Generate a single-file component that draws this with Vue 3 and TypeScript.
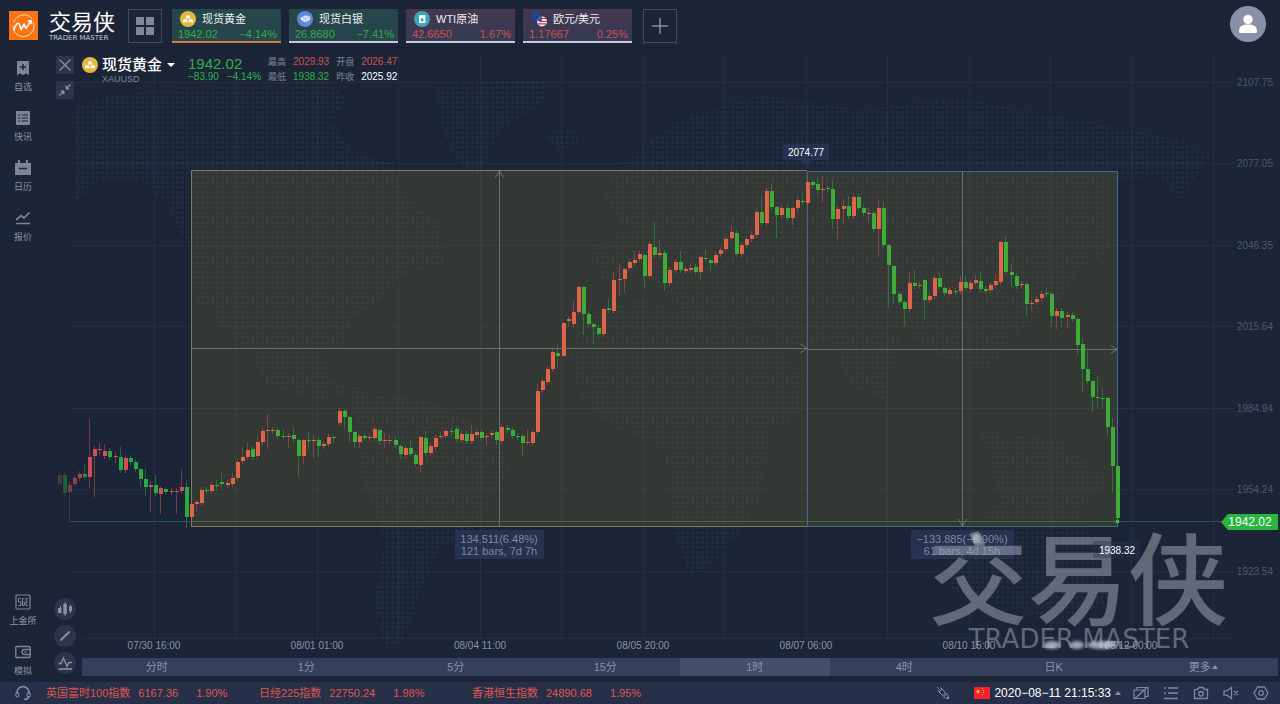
<script setup lang="ts">
import { computed, ref } from 'vue'

type Bar = [dir: 'u' | 'd', top: number, bottom: number, high?: number, low?: number]

interface Quote {
  icon: 'gold' | 'silver' | 'oil' | 'euro'
  name: string
  price: string
  change: string
  trend: 'up' | 'down'
}

const quotes: Quote[] = [
  { icon: 'gold', name: '现货黄金', price: '1942.02', change: '−4.14%', trend: 'down' },
  { icon: 'silver', name: '现货白银', price: '26.8680', change: '−7.41%', trend: 'down' },
  { icon: 'oil', name: 'WTI原油', price: '42.6650', change: '1.67%', trend: 'up' },
  { icon: 'euro', name: '欧元/美元', price: '1.17667', change: '0.25%', trend: 'up' },
]
const activeQuote = ref(0)

const periods = ['分时', '1分', '5分', '15分', '1时', '4时', '日K', '更多']
const activePeriod = ref(4)

const indices = [
  { name: '英国富时100指数', value: '6167.36', change: '1.90%' },
  { name: '日经225指数', value: '22750.24', change: '1.98%' },
  { name: '香港恒生指数', value: '24890.68', change: '1.95%' },
]

const priceAxis = [
  { y: 82, label: '2107.75' },
  { y: 163, label: '2077.05' },
  { y: 245, label: '2046.35' },
  { y: 326, label: '2015.64' },
  { y: 408, label: '1984.94' },
  { y: 489, label: '1954.24' },
  { y: 571, label: '1923.54' },
]
const timeAxis = [
  { x: 154, label: '07/30 16:00' },
  { x: 317, label: '08/01 01:00' },
  { x: 480, label: '08/04 11:00' },
  { x: 643, label: '08/05 20:00' },
  { x: 806, label: '08/07 06:00' },
  { x: 969, label: '08/10 15:00' },
  { x: 1131, label: '08/12 00:00' },
]
const gridColumns = Array.from({ length: 14 }, (_, i) => Math.round(154 + i * 81.45))

const bars: Bar[] = [
  ['u', 475, 484], ['d', 475, 493], ['u', 485, 492, 482, 523], ['u', 478, 484], ['u', 474, 478],
  ['d', 474, 477, 464], ['u', 457, 477, 419, 488], ['u', 449, 456, 446, 497], ['u', 449, 450, 443, 455],
  ['u', 451, 456, 444], ['d', 451, 457], ['u', 456, 457, 452, 463], ['d', 457, 470, 447], ['u', 458, 470],
  ['d', 458, 462], ['d', 462, 469], ['d', 469, 479, 468, 487], ['d', 479, 487, 469, 496], ['u', 485, 487, 481, 512],
  ['d', 485, 493, 475], ['u', 488, 494, 486, 514], ['d', 489, 492, 487, 495], ['u', 491, 492], ['u', 491, 492, 488, 514],
  ['u', 487, 491, 469], ['d', 487, 517, 480, 528],
  ['u', 504, 517, 501, 527], ['u', 502, 504, 500, 512], ['u', 490, 503], ['d', 490, 491], ['u', 485, 491],
  ['d', 485, 486, 480, 491], ['d', 482, 484, 473], ['u', 483, 485], ['u', 478, 484, 473], ['u', 462, 478, 458],
  ['u', 457, 461, 447], ['u', 450, 457, 443], ['d', 449, 457], ['u', 442, 456, 436], ['u', 431, 442],
  ['u', 430, 431, 414, 449], ['u', 430, 431, 427, 434], ['d', 430, 436], ['d', 436, 437, 429, 439], ['u', 436, 437, 434, 448],
  ['d', 435, 439, 427], ['d', 440, 456, 438, 477], ['u', 440, 456, 439, 464], ['d', 440, 441, 432, 449], ['u', 440, 441, 435, 458],
  ['d', 440, 446, 438, 457], ['u', 444, 446], ['u', 437, 444], ['d', 437, 438, 435, 443], ['u', 411, 423],
  ['d', 411, 417, 409, 428], ['d', 417, 432, 416, 442], ['d', 432, 442, 431, 448], ['u', 436, 442, 434, 448], ['d', 436, 438],
  ['u', 437, 438], ['u', 429, 438], ['d', 430, 441, 428, 445], ['u', 440, 441, 433, 448], ['u', 440, 441, 435, 444],
  ['d', 440, 445], ['d', 446, 454, 444, 459], ['u', 448, 455], ['d', 448, 454, 440], ['d', 455, 464],
  ['u', 437, 465, 436, 472], ['d', 438, 453, 431], ['u', 446, 453], ['u', 438, 447], ['u', 436, 437, 432, 439],
  ['u', 431, 436], ['d', 431, 432, 428, 436], ['d', 429, 439], ['u', 434, 440], ['d', 434, 441],
  ['u', 434, 441, 425], ['u', 432, 435], ['d', 432, 438], ['u', 436, 437, 435, 445], ['u', 433, 435],
  ['d', 432, 440, 430, 445], ['u', 427, 441, 424], ['d', 428, 430], ['d', 430, 436], ['d', 436, 437],
  ['d', 436, 443, 434, 456], ['u', 442, 443, 429, 445], ['u', 432, 443], ['u', 391, 432, 384], ['u', 381, 390],
  ['u', 369, 382], ['u', 352, 369], ['d', 353, 356, 344, 367], ['u', 323, 356, 322, 357], ['u', 319, 321, 316, 327],
  ['u', 312, 324, 300], ['u', 287, 312, 286], ['d', 287, 314, 286, 335], ['d', 314, 324], ['d', 324, 327, 323, 344],
  ['d', 328, 334], ['u', 309, 334, 308], ['d', 308, 310, 299], ['u', 280, 311, 272], ['u', 279, 280, 264, 296],
  ['u', 269, 279, 268, 293], ['u', 262, 268], ['u', 260, 263, 251], ['u', 254, 259, 250], ['d', 255, 276, 254, 288],
  ['u', 244, 276, 241, 279], ['d', 247, 255, 222], ['u', 253, 255, 240], ['d', 253, 283, 250, 291], ['u', 270, 283],
  ['u', 262, 270], ['d', 262, 270, 251], ['u', 269, 271], ['u', 268, 270, 263], ['d', 267, 272],
  ['u', 257, 272, 256, 279], ['d', 258, 259, 250], ['d', 260, 263, 258, 271], ['u', 255, 263], ['u', 250, 254],
  ['u', 239, 249], ['u', 232, 238, 225], ['d', 233, 254], ['u', 245, 254], ['u', 239, 245],
  ['u', 235, 239, 231], ['u', 212, 235], ['d', 212, 223, 197], ['u', 191, 223], ['d', 191, 207, 184],
  ['d', 207, 215, 206, 238], ['u', 208, 215], ['d', 208, 218], ['u', 208, 218, 207, 225], ['u', 200, 208],
  ['d', 201, 202, 193], ['u', 182, 203, 180], ['d', 182, 185, 180], ['d', 184, 190, 178], ['u', 189, 190, 176, 202],
  ['d', 188, 189], ['d', 189, 219, 180, 229], ['u', 209, 219, 206, 239], ['u', 206, 209, 199, 224], ['d', 206, 216, 196],
  ['u', 197, 216], ['d', 197, 208], ['d', 208, 213], ['u', 213, 214, 208, 222], ['d', 213, 229],
  ['u', 208, 229, 200, 256], ['d', 208, 245, 202], ['d', 245, 265, 244, 308], ['d', 266, 294, 265, 304], ['d', 294, 302],
  ['d', 302, 309, 300, 327], ['u', 283, 309, 272], ['d', 283, 286, 270], ['u', 285, 286], ['d', 280, 300, 279, 320],
  ['u', 296, 300], ['u', 278, 296], ['d', 278, 287, 272], ['d', 288, 293], ['u', 290, 294],
  ['d', 291, 292], ['u', 282, 291, 276], ['d', 282, 288, 275], ['u', 283, 289], ['u', 280, 283, 275],
  ['d', 281, 289, 272], ['d', 289, 291], ['u', 285, 290], ['u', 281, 285, 274], ['u', 242, 282, 241],
  ['d', 242, 272, 236], ['d', 272, 275, 264, 287], ['d', 276, 286], ['u', 284, 285], ['d', 284, 304, 283, 316],
  ['u', 303, 304, 300, 311], ['u', 299, 302], ['u', 294, 298], ['d', 293, 294, 288], ['d', 294, 316, 292, 327],
  ['u', 311, 316, 308, 329], ['d', 311, 318, 308, 327], ['u', 315, 317, 312, 328], ['d', 315, 319], ['d', 319, 345, 317, 355],
  ['d', 344, 369, 338, 393], ['d', 369, 381, 351], ['d', 381, 397, 380, 412], ['d', 397, 398, 376, 408], ['d', 398, 399, 388, 408],
  ['d', 398, 427, 396, 436], ['d', 427, 466, 418, 492], ['d', 466, 518, 465, 527],
]

const firstBarX = 58.5
const barPitch = 5.091
const measuredFrom = 26

const candles = computed(() =>
  bars.map(([dir, top, bottom, high, low], i) => ({
    x: Math.round(firstBarX + i * barPitch),
    top,
    height: Math.max(1, bottom - top),
    high: high ?? top - 3,
    low: low ?? bottom + 3,
    tone: `${dir === 'u' ? 'rise' : 'fall'}${i >= measuredFrom ? ' measured' : ''}`,
    opacity: Math.min(1, 0.3 + i * 0.11),
  })),
)

const land = [
  'M75 108 L110 96 L215 84 L330 82 L345 100 L330 120 L350 150 L395 165 L400 190 L440 225 L445 265 L400 275 L380 300 L350 320 L345 350 L325 355 L330 380 L365 390 L320 400 L265 385 L250 350 L225 330 L195 300 L190 250 L165 200 L140 180 L100 180 L75 200 Z',
  'M350 390 L430 400 L500 440 L510 470 L490 500 L470 530 L440 550 L420 590 L405 640 L385 650 L375 600 L385 540 L360 470 Z',
  'M435 84 L545 80 L545 100 L500 130 L475 180 L455 160 L440 120 Z',
  'M545 135 L570 128 L580 142 L560 155 Z',
  'M600 190 L640 150 L680 120 L760 95 L860 110 L960 98 L1080 120 L1180 140 L1210 155 L1180 200 L1160 175 L1110 180 L1110 250 L1080 270 L1060 300 L1020 330 L985 375 L950 360 L900 330 L890 400 L850 385 L830 340 L780 350 L750 320 L690 320 L640 270 L600 280 L590 250 L625 230 Z',
  'M590 315 L640 300 L740 320 L780 350 L810 375 L800 410 L770 440 L760 500 L720 560 L690 575 L670 520 L665 450 L620 430 L580 400 L570 350 Z',
  'M980 430 L1060 440 L1110 480 L1080 510 L1110 600 L1060 625 L990 600 L950 590 L950 540 L1000 500 Z',
]
</script>

<template>
  <div class="page">
    <header class="topbar">
      <a class="brand" href="#" aria-label="交易侠 TRADER MASTER">
        <svg class="brand-mark" viewBox="0 0 30 30" aria-hidden="true">
          <rect width="30" height="30" fill="#ff7412" />
          <path d="M24 8 A11 11 0 0 0 5 12 M4 15 A11 11 0 0 0 26 16 V12" fill="none" stroke="#ffe6d3" stroke-width=".9" />
          <path d="M5 20 C7 13 9.500 11 10.800 14 L12.500 19.500 L15.500 13.500 L17.500 18 L22.500 10.500 M19.500 10.700 L22.900 10 L23.400 13.500" fill="none" stroke="#fff" stroke-width="1.600" stroke-linejoin="round" />
        </svg>
        <span class="brand-text">
          <span class="brand-name">交易侠</span>
          <span class="brand-sub">TRADER MASTER</span>
        </span>
      </a>
      <button class="square" type="button" aria-label="布局">
        <svg viewBox="0 0 18 18" width="18" height="18"><path d="M0 0h8v8H0zM10 0h8v8h-8zM0 10h8v8H0zM10 10h8v8h-8z" fill="#808799" /></svg>
      </button>
      <div class="quotes">
        <button
          v-for="(q, i) in quotes"
          :key="q.name"
          type="button"
          class="quote"
          :class="[q.trend, { active: i === activeQuote }]"
          @click="activeQuote = i"
        >
          <span class="quote-name">
            <svg viewBox="0 0 16 16" width="16" height="16" aria-hidden="true">
              <template v-if="q.icon === 'gold'">
                <circle cx="8" cy="8" r="8" fill="#e5b93f" />
                <path d="M6.500 4.500h3l1 3h-5zM3.500 8.300h3.300l1 3h-5zM9.200 8.300h3.300l.8 3h-5z" fill="#fff" />
              </template>
              <template v-else-if="q.icon === 'silver'">
                <circle cx="8" cy="8" r="8" fill="#5f86d8" />
                <path d="M2.800 7 L6 5.500 L8 4.500 L12.500 5 L13.300 8.500 L9 11.500 L6 10.500 Z" fill="#dce6fb" />
                <path d="M6 6.500 L8.500 7.500 L9 11 M8.500 7.500 L12.500 5.500" stroke="#8ea9e4" stroke-width=".8" fill="none" />
              </template>
              <template v-else-if="q.icon === 'oil'">
                <circle cx="8" cy="8" r="8" fill="#3ca4bd" />
                <rect x="5" y="4" width="6.500" height="8" rx="1" fill="#fff" />
                <path d="M8.200 6 L9.500 8.500 A1.400 1.400 0 1 1 6.900 8.500 Z" fill="#3ca4bd" />
              </template>
              <template v-else>
                <circle cx="5.500" cy="5.500" r="5" fill="#173d9c" />
                <circle cx="5.500" cy="5.500" r="2.800" fill="none" stroke="#8b8a4f" stroke-width=".8" stroke-dasharray="1 1.200" />
                <circle cx="11" cy="10.500" r="5" fill="#e9e2ea" />
                <path d="M10 7.500h5M8 10.500h8M6.500 12.800h8.500" stroke="#cf4057" stroke-width="1.200" />
                <path d="M6.100 10 A5 5 0 0 1 11 5.500 V10 Z" fill="#42549b" />
              </template>
            </svg>
            {{ q.name }}
          </span>
          <span class="quote-values"><span>{{ q.price }}</span><span>{{ q.change }}</span></span>
        </button>
      </div>
      <button class="square add" type="button" aria-label="添加">
        <svg viewBox="0 0 16 16" width="16" height="16"><path d="M8 0v16M0 8h16" stroke="#848b9c" stroke-width="1.500" /></svg>
      </button>
      <button class="avatar" type="button" aria-label="账户">
        <svg viewBox="0 0 36 36" width="36" height="36">
          <circle cx="18" cy="18" r="18" fill="#8a90a8" />
          <circle cx="18" cy="13.500" r="4.700" fill="#fff" />
          <path d="M9 25.500 C9 20 13 18.500 18 18.500 S27 20 27 25.500 Q27 27 25.500 27 H10.500 Q9 27 9 25.500Z" fill="#fff" />
        </svg>
      </button>
    </header>

    <div class="body">
      <nav class="sidebar">
        <button type="button">
          <svg viewBox="0 0 16 16"><path d="M2 1h12v14l-3-1.500L8 15l-3-1.500L2 15z" fill="#7d8498" /><path d="M8 4v6M5 7h6" stroke="#1c2538" stroke-width="1.500" /></svg>
          自选
        </button>
        <button type="button">
          <svg viewBox="0 0 16 16"><rect x="1" y="1" width="14" height="14" rx="1" fill="#7d8498" /><path d="M3 5h2M6.500 5h6.500M3 8h2M6.500 8h6.500M3 11h2M6.500 11h6.500" stroke="#1c2538" stroke-width="1.200" /></svg>
          快讯
        </button>
        <button type="button">
          <svg viewBox="0 0 16 16"><path d="M0 3h3V0h2v3h6V0h2v3h3v12H0z" fill="#7d8498" /><path d="M4 8.500h8" stroke="#1c2538" stroke-width="1.500" /></svg>
          日历
        </button>
        <button type="button">
          <svg viewBox="0 0 16 16"><path d="M1 10 L6 5.500 L9 8 L14.500 2.500 M1 13.500h14" fill="none" stroke="#7d8498" stroke-width="1.700" /></svg>
          报价
        </button>
        <span class="spring"></span>
        <button type="button">
          <svg viewBox="0 0 16 16"><rect x="1" y="1" width="14" height="14" rx="1" fill="none" stroke="#7d8498" stroke-width="1.200" /><path d="M5.800 4.500H3.500v3.300h2.300v3.700H3.200M9.400 4.500H7.500v7h1.900V8.300h-.8M13 4.500h-2v7h2M11 8h2" fill="none" stroke="#7d8498" /></svg>
          上金所
        </button>
        <button type="button">
          <svg viewBox="0 0 16 16"><rect x=".8" y="2.500" width="14.400" height="11" rx="1" fill="none" stroke="#7d8498" stroke-width="1.400" /><path d="M15 5.500H9.500a2.500 2.500 0 0 0 0 5H15" fill="none" stroke="#7d8498" stroke-width="1.400" /><path d="M9.500 8h2" stroke="#7d8498" stroke-width="1.400" /></svg>
          模拟
        </button>
      </nav>

      <main class="main">
        <div class="stage">
          <svg class="chart" viewBox="46 48 1234 610" role="img" aria-label="现货黄金 XAUUSD 1时 K线图">
            <defs>
              <pattern id="dots" width="5" height="5" patternUnits="userSpaceOnUse">
                <rect x="1" y="1" width="3" height="3" fill="#3a4663" fill-opacity=".2" />
              </pattern>
              <filter id="soft" x="-50%" y="-50%" width="200%" height="200%"><feGaussianBlur stdDeviation="1.800" /></filter>
            </defs>
            <path v-for="shape in land" :key="shape" :d="shape" fill="url(#dots)" />

            <g class="grid-lines">
              <path v-for="x in gridColumns" :key="x" :d="`M${x + 0.5} 56V638`" />
              <path v-for="tick in priceAxis" :key="tick.y" :d="`M70 ${tick.y + 0.5}H1234`" />
              <path d="M82 638.500H1234" />
            </g>
            <path class="last-line" d="M70 521.500H1224" />

            <g class="measure">
              <rect x="191" y="170" width="616" height="357" />
              <rect x="807" y="171" width="311" height="356" />
            </g>
            <path class="last-line inner" d="M191 521.500H1118" />
            <path class="edge yellow" d="M807 170.500H191.500V526.500H807" />
            <path class="edge blue" d="M807.500 171.500H1117.500V526.500H807.500Z" />
            <g class="arrows">
              <path d="M191 348.500H807M800 344l7 4.500l-7 4.500M499.500 527V171M495 178l4.500-7l4.500 7" />
              <path d="M807 349.500H1117M1110 345l7 4.500l-7 4.500M962.500 171V526M958 519l4.500 7l4.500-7" />
            </g>

            <g v-for="c in candles" :key="c.x" :class="c.tone" :opacity="c.opacity">
              <path class="wick" :d="`M${c.x + 0.5} ${c.high}V${c.low}`" />
              <rect :x="c.x - 1" :y="c.top" width="4" :height="c.height" />
            </g>
            <circle cx="1117.500" cy="521.500" r="2" fill="#37b84f" />

            <g class="axis-text">
              <text v-for="tick in priceAxis" :key="tick.label" class="price" x="1273" :y="tick.y + 4">{{ tick.label }}</text>
              <text v-for="tick in timeAxis" :key="tick.label" class="time" :x="tick.x" y="649">{{ tick.label }}</text>
            </g>

            <g>
              <rect class="tag" x="455" y="530" width="89" height="29" />
              <text class="measure-text" x="499" y="543">134.511(6.48%)</text>
              <text class="measure-text" x="499" y="555">121 bars, 7d 7h</text>
              <rect class="tag" x="911" y="530" width="103" height="29" />
              <text class="measure-text" x="962" y="543">−133.885(−6.90%)</text>
              <text class="measure-text" x="962" y="555">61 bars, 4d 15h</text>
            </g>
            <path class="tag" d="M783 144H829V160H812L807 167L801 160H783Z" />
            <text class="peak" x="806" y="156">2074.77</text>

            <g class="watermark">
              <text class="watermark-name" x="1078" y="617">交易侠</text>
              <text class="watermark-sub" x="1079" y="648">TRADER MASTER</text>
            </g>
            <g filter="url(#soft)" fill="#d5d9e2" fill-opacity=".7">
              <ellipse cx="1052" cy="645" rx="8" ry="4" />
              <ellipse cx="1077" cy="645" rx="7" ry="4" />
              <ellipse cx="1102" cy="645" rx="15" ry="4" />
              <rect x="973" y="534" width="8" height="9" fill-opacity=".5" />
            </g>
            <rect class="tag low-tag" x="1093" y="541" width="47" height="17" />
            <text class="peak" x="1117" y="554">1938.32</text>

            <path d="M1221 522L1228 514H1278V530H1228Z" fill="#2ab63e" />
            <text class="last-price" x="1250" y="526">1942.02</text>
          </svg>

          <div class="overlay">
            <div class="tools-top">
              <button type="button" aria-label="关闭"><svg viewBox="0 0 18 18"><path d="M3.500 3.500l11 11M14.500 3.500l-11 11" stroke="#8b92a4" stroke-width="1.200" /></svg></button>
              <button type="button" aria-label="收起"><svg viewBox="0 0 18 18"><path d="M3.500 14.500L7 11M14.500 3.500L11 7" stroke="#8b92a4" stroke-width="1.300" /><path d="M4.800 10H8v3.200zM10 4.800V8h3.200z" fill="#8b92a4" stroke="#8b92a4" /></svg></button>
            </div>
            <div class="symbol">
              <svg viewBox="0 0 16 16" width="16" height="16" aria-hidden="true">
                <circle cx="8" cy="8" r="8" fill="#e5b93f" />
                <path d="M6.500 4.500h3l1 3h-5zM3.500 8.300h3.300l1 3h-5zM9.200 8.300h3.300l.8 3h-5z" fill="#fff" />
              </svg>
              <div>
                <button type="button" class="symbol-name">现货黄金<span class="caret-down"></span></button>
                <div class="symbol-code">XAUUSD</div>
              </div>
            </div>
            <div class="price-block">
              <div class="price-now">1942.02</div>
              <div class="price-diff"><span>−83.90</span><span>−4.14%</span></div>
            </div>
            <dl class="stats">
              <dt>最高</dt><dd class="red">2029.93</dd><dt>开盘</dt><dd class="red">2026.47</dd>
              <dt>最低</dt><dd class="green">1938.32</dd><dt>昨收</dt><dd>2025.92</dd>
            </dl>
          </div>

          <div class="tools-bottom">
            <button type="button" aria-label="图表类型"><svg viewBox="0 0 22 22"><path d="M4 10h3.500v5H4zM9.300 6h3.500v10H9.300zM15 8.500h3v4.500h-3z" fill="#8b92a4" /><path d="M6.500 8v2M11 4v14M16.500 7v8" stroke="#8b92a4" /></svg></button>
            <button type="button" aria-label="画线"><svg viewBox="0 0 22 22"><path d="M6.500 15.500L15.500 6.500" stroke="#8b92a4" stroke-width="2" /></svg></button>
            <button type="button" aria-label="指标"><svg viewBox="0 0 22 22"><path d="M4.500 11.500H7L9.500 6L13 14.500L14.800 10.500H18M4.500 17H18" fill="none" stroke="#8b92a4" stroke-width="1.400" /></svg></button>
          </div>
        </div>

        <div class="periods">
          <button
            v-for="(p, i) in periods"
            :key="p"
            type="button"
            :class="{ active: i === activePeriod }"
            @click="activePeriod = i"
          >
            {{ p }}<span v-if="i === periods.length - 1" class="caret-up"></span>
          </button>
        </div>
      </main>
    </div>

    <footer class="status">
      <button type="button" class="support" aria-label="客服">
        <svg viewBox="0 0 16 16"><path d="M2 9V7.500a6 6 0 0 1 12 0V9M13.500 11c0 2-1.500 3.500-4.500 3.500" fill="none" stroke="#8b94a9" stroke-width="1.400" /><rect x=".8" y="7.500" width="3" height="4.500" rx="1.200" fill="none" stroke="#8b94a9" /><rect x="12.200" y="7.500" width="3" height="4.500" rx="1.200" fill="none" stroke="#8b94a9" /></svg>
      </button>
      <div class="indices">
        <div v-for="item in indices" :key="item.name" class="index">
          <span>{{ item.name }}</span><span>{{ item.value }}</span><span class="pct">{{ item.change }}</span>
        </div>
      </div>
      <button type="button" class="plug" aria-label="连接">
        <svg viewBox="0 0 16 16"><path d="M2 2l3 3M4 7l3-3l2.500 2.500a2.100 2.100 0 0 1-3 3zM5.500 2.500L7 4M2.500 5.500L4 7M14 14l-2-2M9 11.500L11.500 9l1.800 1.800a1.800 1.800 0 0 1-2.500 2.500zM9 11.500l-1 1M11.500 9l1-1" fill="none" stroke="#8891a8" /></svg>
      </button>
      <button type="button" class="clock">
        <svg viewBox="0 0 16 12" width="16" height="12" aria-hidden="true"><rect width="16" height="12" fill="#f5222d" /><path d="M4 2l.6 1.700h1.800L5 4.800l.5 1.700L4 5.500L2.500 6.500L3 4.800L1.600 3.700h1.800z" fill="#ffd83b" /><path d="M8 1.500h1M9 3.500h1M9 5.500h1M8 7.500h1" stroke="#ffb43b" /></svg>
        2020−08−11 21:15:33<span class="caret-up"></span>
      </button>
      <div class="status-icons">
        <button type="button" aria-label="隐藏面板"><svg viewBox="0 0 16 16"><path d="M1 5h11v8.500H1zM4 5V2.500h11v9h-3M1.500 14L14 2.500" fill="none" stroke="#7f889e" stroke-width="1.200" /></svg></button>
        <button type="button" aria-label="列表"><svg viewBox="0 0 16 16"><path d="M5 3h10M5 8h10M1 13.500h14" stroke="#7f889e" stroke-width="1.500" /><path d="M1 3h2M1 8h2" stroke="#7f889e" stroke-width="1.500" /></svg></button>
        <button type="button" aria-label="截图"><svg viewBox="0 0 16 16"><path d="M1.500 4.500h3L6 2.500h4l1.500 2h3v9h-13z" fill="none" stroke="#7f889e" stroke-width="1.300" stroke-linejoin="round" /><circle cx="8" cy="8.800" r="2.300" fill="none" stroke="#7f889e" stroke-width="1.300" /></svg></button>
        <button type="button" aria-label="静音"><svg viewBox="0 0 16 16"><path d="M1 5.800h3L8.500 2.500v11L4 10.200H1zM11 6l4 4M15 6l-4 4" fill="none" stroke="#7f889e" stroke-width="1.300" /></svg></button>
        <button type="button" aria-label="设置"><svg viewBox="0 0 16 16"><path d="M4.500 2h7L15 8l-3.500 6h-7L1 8z" fill="none" stroke="#7f889e" stroke-width="1.300" stroke-linejoin="round" /><circle cx="8" cy="8" r="2.300" fill="none" stroke="#7f889e" stroke-width="1.300" /></svg></button>
      </div>
    </footer>
  </div>
</template>

<style>
body {
  background: #1c2538;
}
</style>

<style scoped>
.page {
  min-height: 100vh;
  display: flex;
  flex-direction: column;
  background: #1c2538;
  color: #fff;
  font-family: 'Liberation Sans', 'Noto Sans CJK SC', sans-serif;
  font-size: 11px;
  line-height: 12px;
}
.page * {
  box-sizing: border-box;
}
button {
  padding: 0;
  border: 0;
  background: none;
  color: inherit;
  font: inherit;
  cursor: pointer;
}
svg {
  display: block;
}

/* top bar */
.topbar {
  height: 48px;
  display: flex;
  align-items: center;
  padding: 4px 14px 0 9px;
  border-bottom: 1px solid #182031;
}
.brand {
  width: 119px;
  display: flex;
  align-items: center;
  gap: 11px;
  color: #fff;
  text-decoration: none;
}
.brand-mark {
  width: 29px;
  height: 29px;
}
.brand-text {
  display: flex;
  flex-direction: column;
  padding-top: 2px;
}
.brand-name {
  font-size: 22px;
  line-height: 22px;
}
.brand-sub {
  font-family: 'DejaVu Sans', sans-serif;
  font-size: 7px;
  line-height: 8px;
  color: #c3c8d2;
  white-space: nowrap;
}
.square {
  width: 34px;
  height: 34px;
  display: grid;
  place-items: center;
  border: 1px solid #434b5e;
}
.quotes {
  display: flex;
  gap: 8px;
  margin: 0 11px 0 10px;
}
.quote {
  width: 109px;
  height: 34px;
  display: flex;
  flex-direction: column;
  justify-content: space-between;
  padding: 2px 4px 1px 6px;
  border-bottom: 2px solid #c5c9d6;
  text-align: left;
}
.quote.active {
  border-bottom-color: #d97a3c;
}
.quote.down {
  background: linear-gradient(#25474a, #28444c);
  color: #2fb04a;
}
.quote.up {
  background: linear-gradient(#46374c, #343a55);
  color: #d0504f;
}
.quote-name {
  display: flex;
  align-items: center;
  gap: 6px;
  padding-left: 2px;
  color: #eef0f4;
  line-height: 16px;
}
.quote-values {
  display: flex;
  justify-content: space-between;
}
.avatar {
  margin-left: auto;
  margin-top: -4px;
}

/* body */
.body {
  flex: 1;
  display: flex;
}
.sidebar {
  width: 46px;
  flex: none;
  display: flex;
  flex-direction: column;
  box-shadow: inset -2px 0 #192133;
}
.sidebar button {
  height: 50px;
  padding-top: 12px;
  display: flex;
  flex-direction: column;
  align-items: center;
  gap: 5px;
  font-size: 9px;
  color: #8d93a3;
}
.sidebar svg {
  width: 16px;
  height: 16px;
}
.spring {
  flex: 1;
}
.main {
  flex: 1;
  min-width: 0;
  display: flex;
  flex-direction: column;
  padding-bottom: 6px;
}
.stage {
  flex: 1;
  display: grid;
}
.stage > * {
  grid-area: 1 / 1;
}
.chart {
  width: 100%;
  height: auto;
}

/* chart */
.grid-lines {
  stroke: #6f7e9e;
  stroke-opacity: 0.1;
}
.last-line {
  stroke: #2f8f6e;
  stroke-opacity: 0.45;
}
.last-line.inner {
  stroke: #4a7a35;
}
.measure rect {
  fill: rgba(105, 104, 44, 0.3);
}
.edge {
  fill: none;
}
.edge.yellow {
  stroke: #7e8052;
}
.edge.blue {
  stroke: #48678a;
}
.arrows {
  fill: none;
  stroke: #828a84;
  stroke-opacity: 0.7;
}
.rise rect {
  fill: #d65155;
}
.fall rect {
  fill: #25ab3f;
}
.rise .wick {
  stroke: #d65155;
  stroke-opacity: 0.5;
}
.fall .wick {
  stroke: #25ab3f;
  stroke-opacity: 0.5;
}
.rise.measured rect {
  fill: #e06548;
}
.fall.measured rect {
  fill: #3ead38;
}
.axis-text text {
  font-size: 10px;
}
.price {
  fill: #4f586b;
  text-anchor: end;
}
.time {
  fill: #8b93a5;
  text-anchor: middle;
}
.tag {
  fill: #283553;
  fill-opacity: 0.85;
}
.low-tag {
  fill-opacity: 0.35;
}
.measure-text {
  font-size: 11px;
  fill: #7f899f;
  text-anchor: middle;
}
.peak {
  font-size: 10px;
  fill: #fff;
  text-anchor: middle;
}
.last-price {
  font-size: 12px;
  fill: #fff;
  text-anchor: middle;
}
.watermark {
  fill: #a6abb8;
  fill-opacity: 0.5;
  text-anchor: middle;
}
.watermark-name {
  font-size: 100px;
  font-weight: 500;
}
.watermark-sub {
  font-family: 'DejaVu Sans', sans-serif;
  font-size: 26px;
}

/* chart overlays */
.overlay {
  align-self: start;
  display: flex;
  align-items: flex-start;
  padding: 8px 10px;
}
.tools-top {
  display: grid;
  gap: 7px;
  margin-right: 8px;
}
.tools-top button {
  width: 18px;
  height: 18px;
  background: #2c354b;
}
.symbol {
  width: 106px;
  display: flex;
  gap: 4px;
  padding-top: 1px;
}
.symbol > div {
  margin-top: -1px;
}
.symbol-name {
  display: flex;
  align-items: center;
  gap: 5px;
  font-size: 15px;
  line-height: 17px;
  font-weight: 500;
  white-space: nowrap;
}
.symbol-code {
  font-size: 9px;
  color: #7d8597;
}
.price-block {
  width: 80px;
  color: #2fb04a;
}
.price-now {
  font-size: 15px;
  line-height: 15px;
}
.price-diff {
  display: flex;
  gap: 8px;
  font-size: 10px;
}
.stats {
  display: grid;
  grid-template-columns: auto auto auto auto;
  gap: 3px 7px;
  margin: 0;
  font-size: 10px;
}
.stats dt {
  font-size: 9px;
  color: #7d8597;
}
.stats dd {
  margin: 0;
}
.red {
  color: #d0504f;
}
.green {
  color: #2fb04a;
}
.tools-bottom {
  place-self: end start;
  display: grid;
  gap: 5px;
  padding: 0 0 0 8px;
  margin-bottom: -16px;
}
.tools-bottom button {
  width: 22px;
  height: 22px;
  border-radius: 50%;
  background: #2c354b;
}
.caret-down,
.caret-up {
  display: inline-block;
  border: 4px solid transparent;
}
.caret-down {
  border-top-color: currentColor;
  border-bottom-width: 0;
}
.caret-up {
  border-width: 0 3px 4px;
  border-bottom-color: currentColor;
}

/* periods */
.periods {
  height: 18px;
  display: flex;
  margin: 0 2px 0 36px;
  background: #343f5b;
  color: #8c94a9;
}
.periods button {
  flex: 1;
  display: flex;
  align-items: center;
  justify-content: center;
  gap: 1px;
}
.periods .active {
  background: #435069;
}

/* status bar */
.status {
  height: 22px;
  display: flex;
  align-items: center;
  padding: 0 11px 0 15px;
  background: #263149;
}
.status svg {
  flex: none;
}
.support svg,
.plug svg,
.status-icons svg {
  width: 16px;
  height: 16px;
}
.indices {
  flex: 1;
  display: flex;
  margin-left: 15px;
  color: #e0554f;
  white-space: nowrap;
}
.index {
  width: 213px;
  display: flex;
  gap: 8px;
}
.pct {
  margin-left: 10px;
}
.plug {
  margin-right: 23px;
}
.clock {
  display: flex;
  align-items: center;
  gap: 4px;
  margin-right: 12px;
  font-size: 12px;
  white-space: nowrap;
}
.clock .caret-up {
  color: #858da0;
}
.status-icons {
  display: flex;
  gap: 14px;
}
</style>
